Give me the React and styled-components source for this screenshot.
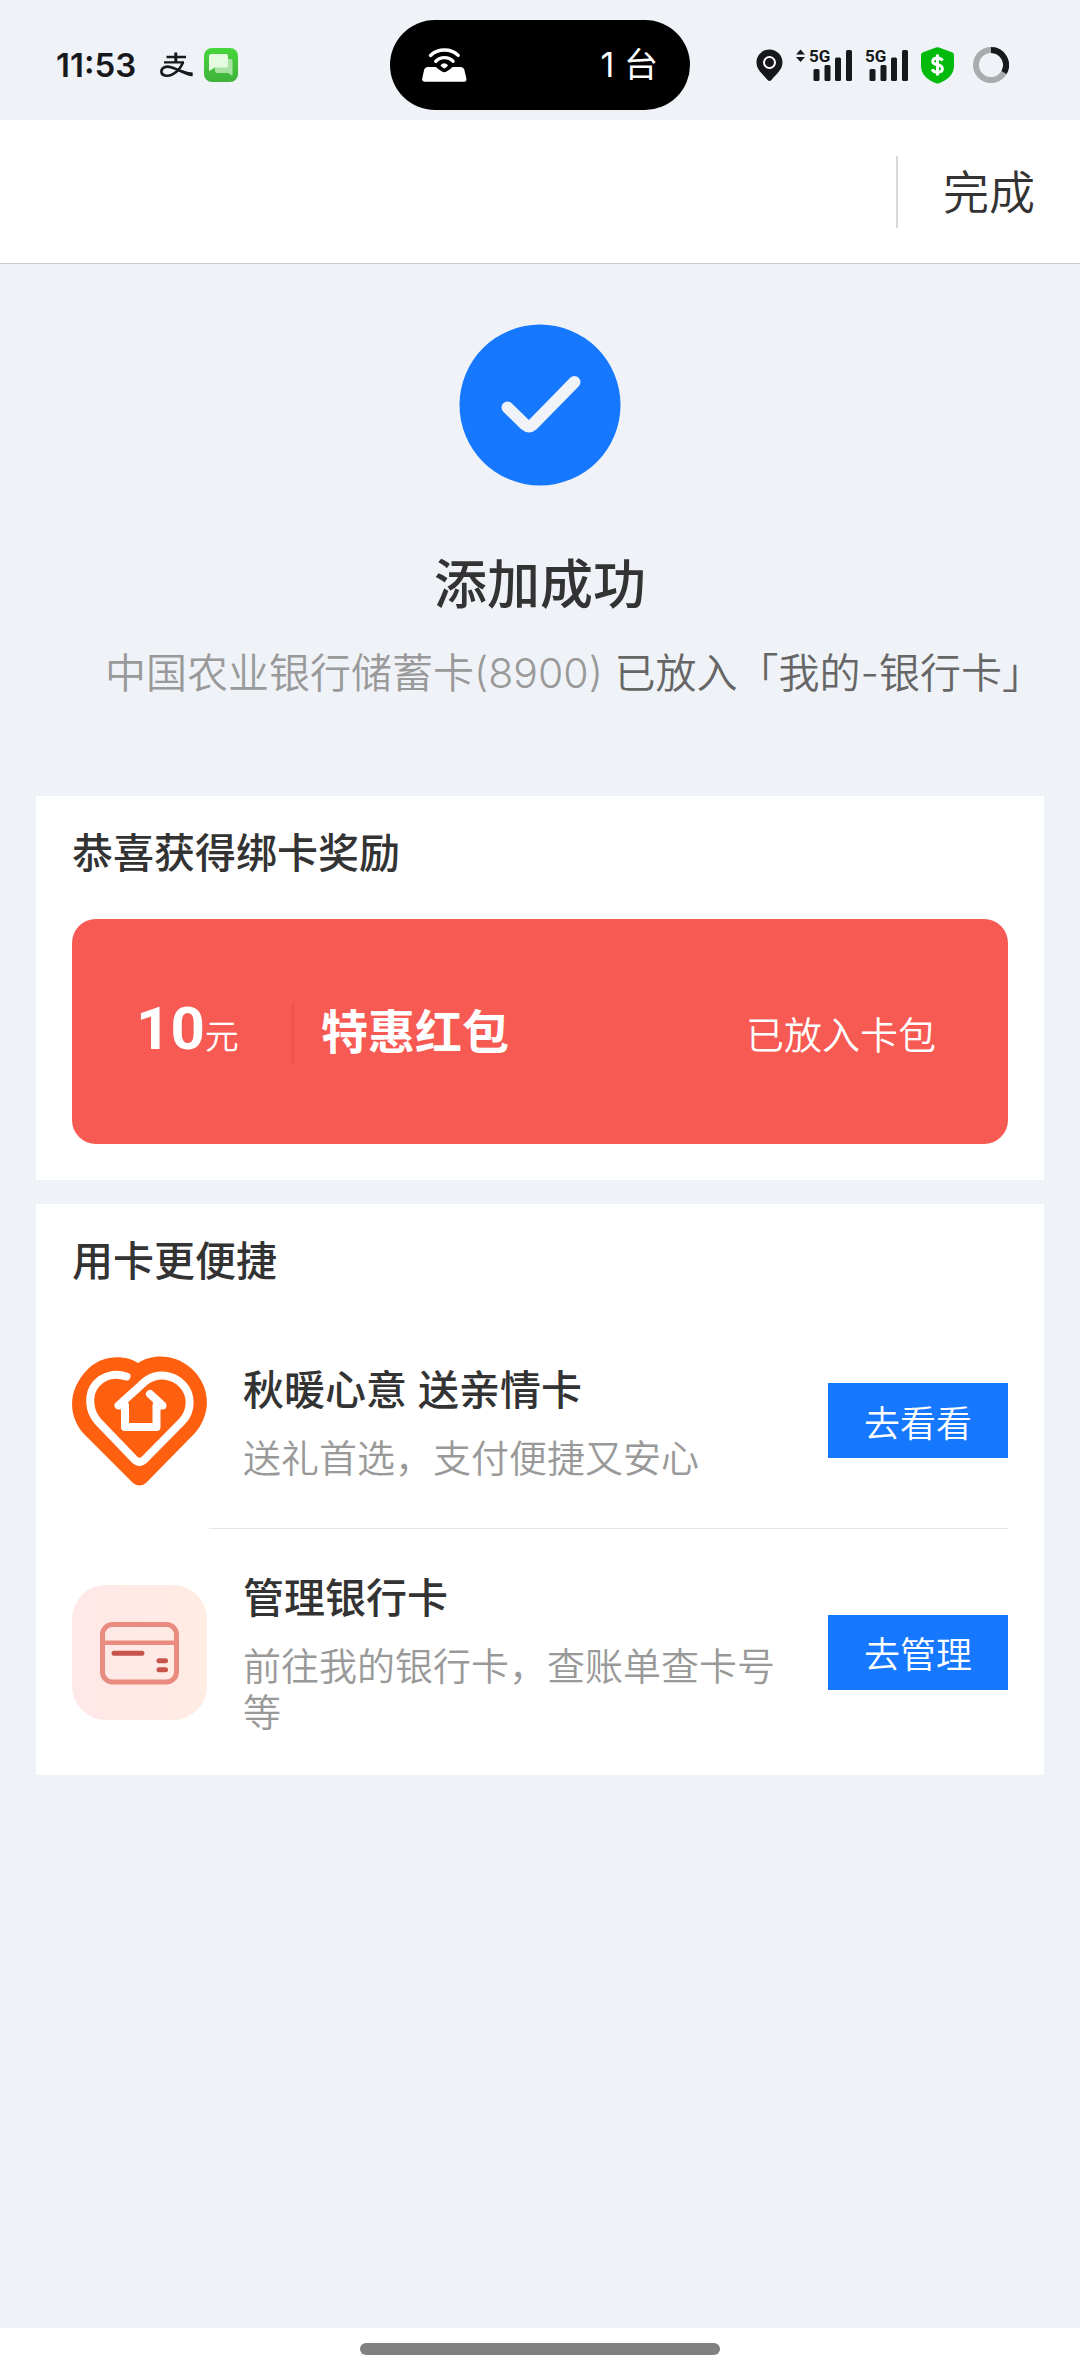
import React from 'react';
import styled, { createGlobalStyle } from 'styled-components';

const color = {
  page: '#eff2f7',
  white: '#ffffff',
  ink: '#16181b',
  title: '#333333',
  text: '#666666',
  muted: '#999999',
  line: '#e5e5e5',
  blue: '#1677ff',
  red: '#f75a53',
};

const services = [
  {
    id: 'family',
    title: '秋暖心意 送亲情卡',
    desc: '送礼首选，支付便捷又安心',
    action: '去看看',
    icon: <HeartIcon />,
  },
  {
    id: 'manage',
    title: '管理银行卡',
    desc: '前往我的银行卡，查账单查卡号等',
    action: '去管理',
    icon: <BankCardIcon />,
  },
];

const App = () => (
  <Page>
    <GlobalStyle />
    <StatusBar>
      <StatusLeft>
        <Time>11:53</Time>
        <AlipayIcon />
        <MessageIcon />
      </StatusLeft>
      <Island>
        <HotspotIcon />
        <span>1 台</span>
      </Island>
      <StatusRight>
        <LocationIcon />
        <SignalIcon arrows />
        <SignalIcon />
        <ShieldIcon />
        <RingIcon />
      </StatusRight>
    </StatusBar>

    <Header>
      <DoneButton type="button">完成</DoneButton>
    </Header>

    <Main>
      <Result>
        <CheckIcon />
        <ResultTitle>添加成功</ResultTitle>
        <ResultDesc>
          <CardName>中国农业银行储蓄卡(8900)</CardName> 已放入「我的-银行卡」
        </ResultDesc>
      </Result>

      <Panels>
        <Panel>
          <PanelTitle>恭喜获得绑卡奖励</PanelTitle>
          <Coupon>
            <Amount>
              <strong>10</strong>元
            </Amount>
            <CouponName>特惠红包</CouponName>
            <CouponStatus>已放入卡包</CouponStatus>
          </Coupon>
        </Panel>

        <Panel>
          <PanelTitle>用卡更便捷</PanelTitle>
          <ServiceList>
            {services.map(item => (
              <Service key={item.id}>
                {item.icon}
                <ServiceText>
                  <ServiceTitle>{item.title}</ServiceTitle>
                  <ServiceDesc>{item.desc}</ServiceDesc>
                </ServiceText>
                <ActionButton type="button">{item.action}</ActionButton>
              </Service>
            ))}
          </ServiceList>
        </Panel>
      </Panels>
    </Main>

    <HomeArea>
      <HomeBar />
    </HomeArea>
  </Page>
);

function AlipayIcon() {
  return (
    <svg width="34" height="26" viewBox="0 0 34 26" fill="none" stroke={color.ink} aria-hidden="true">
      <path d="M6.5 5H26M4 10.4H24" strokeWidth="2.4" />
      <path d="M15.8 0.5V10.4" strokeWidth="3" />
      <path d="M23 10.4C21 15 17 20 12.5 22.3C7.5 24.8 1.5 24 1.4 19.6C1.4 15.6 6.2 13.6 11 15.2C17 17.2 25 21 32.5 22.2" strokeWidth="2.6" />
      <path d="M20 17.8C24.5 19.6 28.5 20.6 32.5 20.6V24.6C27.5 23.4 23 21.6 18 19.2Z" fill={color.ink} stroke="none" />
    </svg>
  );
}

function MessageIcon() {
  return (
    <svg width="34" height="34" viewBox="0 0 34 34" aria-hidden="true">
      <defs>
        <linearGradient id="msg" x1="0" y1="0" x2="0" y2="1">
          <stop offset="0" stopColor="#46d63c" />
          <stop offset="1" stopColor="#3fb23a" />
        </linearGradient>
      </defs>
      <rect width="34" height="34" rx="8" fill="url(#msg)" />
      <path d="M13 11H26.5Q28.5 11 28.5 13V28L24 25H13Q11 25 11 23V13Q11 11 13 11Z" fill="#a9e3a4" />
      <path d="M7 6H22Q24 6 24 8V17.5Q24 19.5 22 19.5H11L5 23V8Q5 6 7 6Z" fill="#e4fbe0" />
    </svg>
  );
}

function HotspotIcon() {
  return (
    <svg width="45" height="34" viewBox="0 0 45 34" fill="none" aria-hidden="true">
      <path d="M8.5 7.4C16 0.2 29 0.2 36.2 7.4" stroke="#fff" strokeWidth="3.4" strokeLinecap="round" />
      <path d="M13.8 13.2C18.5 8.4 26.5 8.4 31 13.2" stroke="#fff" strokeWidth="3.4" strokeLinecap="round" />
      <path d="M5.5 19H13C14.5 19 15 19.8 16.2 21L20 23.6Q22.2 24.8 24.5 23.6L28.3 21C29.5 19.8 30 19 31.5 19H39Q41.5 19 42.3 21.5L44.4 30.5Q44.8 33.8 41.5 33.8H3Q-0.3 33.8 0.2 30.5L2.2 21.5Q3 19 5.5 19Z" fill="#fff" />
      <path d="M18.5 17.2Q22.3 13.4 26 17.2Q26 18.2 22.3 20.6Q18.5 18.2 18.5 17.2Z" fill="#fff" />
    </svg>
  );
}

function LocationIcon() {
  return (
    <svg width="27" height="33" viewBox="0 0 27 33" aria-hidden="true">
      <path d="M13.5 0.5C20.5 0.5 26.5 6 26.5 13.3C26.5 20.5 21 24.5 15.4 31Q13.5 33 11.6 31C6 24.5 0.5 20.5 0.5 13.3C0.5 6 6.5 0.5 13.5 0.5Z" fill={color.ink} />
      <circle cx="13.5" cy="13.5" r="5.5" fill="none" stroke="#fff" strokeWidth="2" />
    </svg>
  );
}

function SignalIcon({ arrows }) {
  const x = arrows ? 13 : 0;
  return (
    <svg width={43 + x} height="49" viewBox={`${-x} -8 ${43 + x} 49`} fill={color.ink} aria-hidden="true">
      {arrows && <path d="M-8.5 0.5L-4 5.5H-13ZM-8.5 13L-4 8H-13Z" />}
      <SignalLabel x="0" y="13">5G</SignalLabel>
      <rect x="4.5" y="20" width="6" height="12" rx="1.5" />
      <rect x="15.5" y="16" width="6" height="16" rx="1.5" />
      <rect x="26" y="8.5" width="6" height="23.5" rx="1.5" />
      <rect x="37" y="1" width="6" height="31" rx="1.5" />
    </svg>
  );
}

function ShieldIcon() {
  return (
    <svg width="33" height="37" viewBox="0 0 33 37" aria-hidden="true">
      <path d="M15 0.6Q16.5 0 18 0.6L31 5.2Q33 6 33 8V19C33 27.5 26 33.5 18 36.2Q16.5 36.7 15 36.2C7 33.5 0 27.5 0 19V8Q0 6 2 5.2Z" fill="#04ba0c" />
      <path d="M21.5 13.6C20.5 11.6 18.8 10.9 16.5 10.9C13.6 10.9 11.8 12.2 11.8 14.4C11.8 19.3 21.4 16.2 21.4 21.6C21.4 23.9 19.4 25.3 16.5 25.3C14 25.3 12 24.4 11.2 22.2M16.5 7.5V28.5" fill="none" stroke="#fff" strokeWidth="3" />
    </svg>
  );
}

function RingIcon() {
  return (
    <svg width="42" height="36" viewBox="-6 0 42 36" fill="none" strokeWidth="6" aria-hidden="true">
      <circle cx="18" cy="18" r="15" stroke="#a9abaf" />
      <path d="M18 3A15 15 0 0 1 31 25.5" stroke={color.ink} />
    </svg>
  );
}

function CheckIcon() {
  return (
    <svg width="162" height="162" viewBox="0 0 162 162" aria-hidden="true">
      <circle cx="81" cy="81" r="80.5" fill={color.blue} />
      <path d="M48.5 83.5L66 100.5Q70 104 74 100.5L115.5 58" fill="none" stroke={color.page} strokeWidth="12" strokeLinecap="round" />
    </svg>
  );
}

function HeartIcon() {
  return (
    <svg width="135" height="135" viewBox="0 0 135 135" fill="none" aria-hidden="true">
      <path d="M66 10C54 2 31 1 16 16C-4 36 -5 62 12 81L61 130Q67.5 135 74 130L122 81C140 61 139 34 120 16C104 1 81 0 66 10Z" fill="#ff6010" />
      <path
        d="M54.5 23.5C42 19.5 31 23 24 31C15.5 41 16.5 58 26 68.5L63 107Q67.5 111 72 107L110 68.5C120 58 120 42 111 32C101 21 86 20 75 27Q71 30 67 34L46.500 52.500H53V74H84.5V52.5H90.5L78 41"
        stroke="#fff"
        strokeWidth="8"
        strokeLinecap="round"
        strokeLinejoin="round"
      />
    </svg>
  );
}

function BankCardIcon() {
  return (
    <svg width="135" height="135" viewBox="0 0 135 135" fill="none" aria-hidden="true">
      <defs>
        <linearGradient id="card-bg" x1="0" y1="0" x2="1" y2="0">
          <stop offset="0" stopColor="#ffe8e8" />
          <stop offset="1" stopColor="#ffece3" />
        </linearGradient>
      </defs>
      <rect width="135" height="135" rx="34" fill="url(#card-bg)" />
      <rect x="30.5" y="39.5" width="74" height="57.5" rx="10" stroke="#e98b7e" strokeWidth="5" />
      <path d="M30 57.7H105" stroke="#e98b7e" strokeWidth="4.5" />
      <path d="M42 68.3H70M87 75.7H93.5M87 84.7H93.5" stroke="#c6544a" strokeWidth="5" strokeLinecap="round" />
    </svg>
  );
}

const GlobalStyle = createGlobalStyle`
  * {
    box-sizing: border-box;
  }
  body {
    margin: 0;
    background-color: ${color.page};
    font-family: Inter, "Noto Sans CJK SC", sans-serif;
  }
  h1, h2, h3, p, ul {
    margin: 0;
    padding: 0;
  }
  button {
    border: 0;
    font-family: inherit;
    cursor: pointer;
  }
  svg {
    display: block;
    flex-shrink: 0;
  }
`;

const Page = styled.div`
  display: flex;
  flex-direction: column;
  min-height: 100vh;
`;

const StatusBar = styled.div`
  display: grid;
  grid-template-columns: 1fr auto 1fr;
  align-items: center;
  padding: 20px 0 10px;
  color: ${color.ink};
`;

const StatusLeft = styled.div`
  display: flex;
  align-items: center;
  gap: 10px;
  padding-left: 56px;
`;

const Time = styled.span`
  margin-right: 14px;
  font-size: 33px;
  font-weight: 600;
  line-height: 40px;
`;

const Island = styled.div`
  display: flex;
  align-items: center;
  justify-content: space-between;
  width: 300px;
  height: 90px;
  padding: 0 32px;
  border-radius: 45px;
  background-color: #000;
  color: ${color.white};
  font-size: 34px;
  line-height: 40px;
`;

const StatusRight = styled.div`
  display: flex;
  align-items: center;
  justify-content: flex-end;
  gap: 13px;
  padding-right: 71px;
`;

const SignalLabel = styled.text`
  font-family: Roboto, sans-serif;
  font-size: 17px;
  font-weight: 700;
`;

const Header = styled.header`
  display: flex;
  align-items: center;
  justify-content: flex-end;
  height: 144px;
  border-bottom: 1px solid #c6ccd3;
  background-color: ${color.white};
`;

const DoneButton = styled.button`
  padding: 0 45px;
  border-left: 2px solid #d9d9d9;
  background: none;
  color: ${color.title};
  font-size: 46px;
  font-weight: 350;
  line-height: 72px;
`;

const Main = styled.main`
  flex: 1;
`;

const Result = styled.section`
  display: flex;
  flex-direction: column;
  align-items: center;
  padding: 60px 0 95px;
`;

const ResultTitle = styled.h1`
  margin-top: 62px;
  color: ${color.title};
  font-size: 53px;
  font-weight: 500;
  line-height: 74px;
`;

const ResultDesc = styled.p`
  width: 100%;
  margin-top: 23px;
  padding-left: 105px;
  color: ${color.text};
  font-size: 41px;
  font-weight: 350;
  line-height: 56px;
  white-space: nowrap;
`;

const CardName = styled.span`
  color: ${color.muted};
`;

const Panels = styled.div`
  display: flex;
  flex-direction: column;
  gap: 24px;
  padding: 0 36px;
`;

const Panel = styled.section`
  padding: 28px 36px 0;
  background-color: ${color.white};
`;

const PanelTitle = styled.h2`
  color: ${color.title};
  font-size: 41px;
  font-weight: 500;
  line-height: 58px;
`;

const Coupon = styled.div`
  display: flex;
  align-items: baseline;
  height: 225px;
  margin: 37px 0 36px;
  padding: 80px 72px 0 64px;
  border-radius: 24px;
  background-color: ${color.red};
  color: ${color.white};
`;

const Amount = styled.div`
  width: 158px;
  border-right: 2px solid #ec524c;
  font-size: 34px;
  font-weight: 350;
  line-height: 52px;
  white-space: nowrap;
  strong {
    font-family: Roboto, sans-serif;
    font-size: 60px;
    font-weight: 700;
  }
`;

const CouponName = styled.h3`
  flex: 1;
  padding-left: 27px;
  font-size: 47px;
  font-weight: 700;
  line-height: 66px;
`;

const CouponStatus = styled.span`
  font-size: 38px;
  font-weight: 350;
  line-height: 56px;
`;

const ServiceList = styled.ul`
  margin-top: 23px;
  list-style: none;
`;

const Service = styled.li`
  display: flex;
  align-items: center;
  gap: 36px;
  padding: 40px 0;
  & + & {
    border-top: 1px solid;
    border-image: linear-gradient(to right, transparent 138px, ${color.line} 138px) 1;
  }
`;

const ServiceText = styled.div`
  flex: 1;
`;

const ServiceTitle = styled.h3`
  color: ${color.title};
  font-size: 41px;
  font-weight: 500;
  line-height: 58px;
`;

const ServiceDesc = styled.p`
  margin-top: 16px;
  color: ${color.muted};
  font-size: 38px;
  font-weight: 350;
  line-height: 46px;
`;

const ActionButton = styled.button`
  width: 180px;
  height: 75px;
  padding: 0;
  background-color: ${color.blue};
  color: ${color.white};
  font-size: 36px;
  font-weight: 350;
`;

const HomeArea = styled.footer`
  height: 48px;
  padding-top: 15px;
  background-color: ${color.white};
`;

const HomeBar = styled.div`
  width: 33.333%;
  height: 12px;
  margin: 0 auto;
  border-radius: 6px;
  background-color: #808080;
`;

export default App;
